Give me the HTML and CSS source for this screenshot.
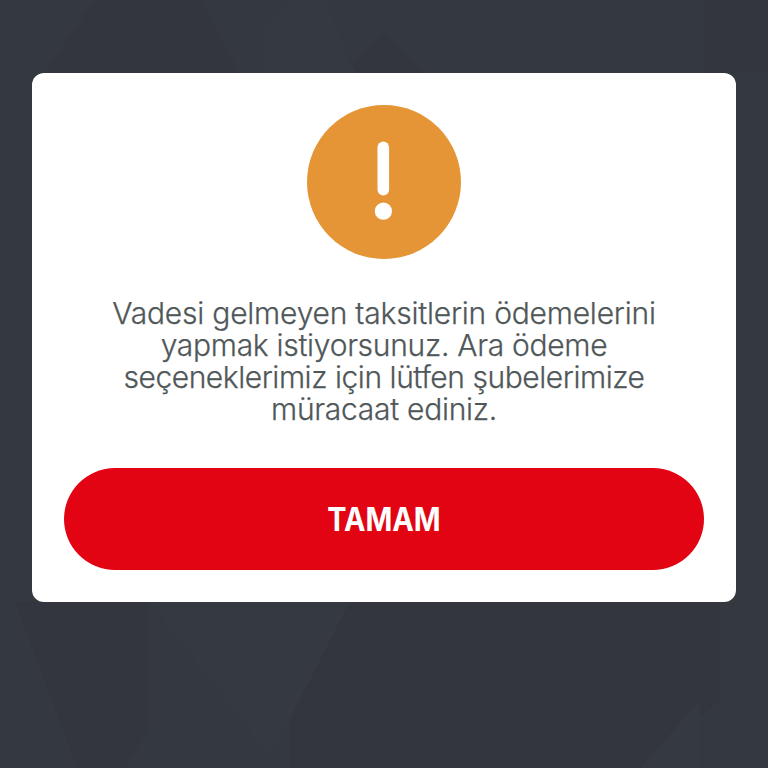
FILE: index.html
```html
<!DOCTYPE html>
<html lang="tr">
<head>
    <meta charset="UTF-8">
    <meta name="viewport" content="width=device-width, initial-scale=1.0">
    <title>Uyarı</title>
    <link rel="stylesheet" href="styles.css">
</head>
<body>
    <svg class="backdrop" viewBox="0 0 768 768" aria-hidden="true">
        <path class="shade" d="M95 0H200L240 73H45ZM384 35L425 73H340ZM704 0H768V73H704ZM15 602H148V730L95 815ZM290 715L350 602H720V700L640 768H290Z"/>
        <path class="light" d="M290 0H325L355 73H264V25ZM150 602H350L270 758ZM640 768L700 700V768Z"/>
    </svg>

    <div class="modal">
        <svg class="icon" viewBox="0 0 154 154" aria-hidden="true">
            <circle cx="77" cy="77" r="77" fill="#e59535"/>
            <rect x="70.5" y="36.5" width="11.6" height="54" rx="5.8" fill="#fff"/>
            <circle cx="76.4" cy="106.2" r="8.6" fill="#fff"/>
        </svg>
        <p class="message">
            <span class="line line-1">Vadesi gelmeyen taksitlerin ödemelerini</span>
            <span class="line line-2">yapmak istiyorsunuz. Ara ödeme</span>
            <span class="line line-3">seçeneklerimiz için lütfen şubelerimize</span>
            <span class="line line-4">müracaat ediniz.</span>
        </p>
        <button class="ok-btn"><span class="ok-label">TAMAM</span></button>
    </div>
</body>
</html>
```
FILE: styles.css
```css
body {
    margin: 0;
    height: 768px;
    overflow: hidden;
    background-color: #34383f;
    font-family: Inter, "Liberation Sans", sans-serif;
    display: flex;
    justify-content: center;
    align-items: flex-start;
}
.backdrop {
    position: absolute;
    left: 0;
    top: 0;
    width: 768px;
    height: 768px;
}
.shade {
    fill: #33363e;
}
.light {
    fill: #353940;
}
.modal {
    position: relative;
    box-sizing: border-box;
    width: 704px;
    height: 529px;
    margin-top: 73px;
    padding: 32px;
    background: #fff;
    border-radius: 12px;
    display: flex;
    flex-direction: column;
    align-items: center;
}
.icon {
    width: 154px;
    height: 154px;
}
.message {
    margin: 38px 0 43px;
    color: #505759;
    font-size: 30px;
    font-weight: 350;
    line-height: 32px;
    text-align: center;
    font-variant-ligatures: none;
    -webkit-text-stroke: 0.25px #505759;
}
.line {
    display: block;
    white-space: nowrap;
}
.line-1 {
    letter-spacing: -0.22px;
}
.line-2 {
    letter-spacing: -0.29px;
}
.line-3 {
    letter-spacing: -0.45px;
}
.line-4 {
    letter-spacing: -0.28px;
}
.ok-btn {
    width: 640px;
    height: 102px;
    padding: 0;
    border: none;
    border-radius: 51px;
    background-color: #e20412;
    color: #fff;
    font-family: inherit;
    font-size: 32px;
    font-weight: 700;
    cursor: pointer;
}
.ok-label {
    display: inline-block;
    transform: scaleX(0.9);
}
```
